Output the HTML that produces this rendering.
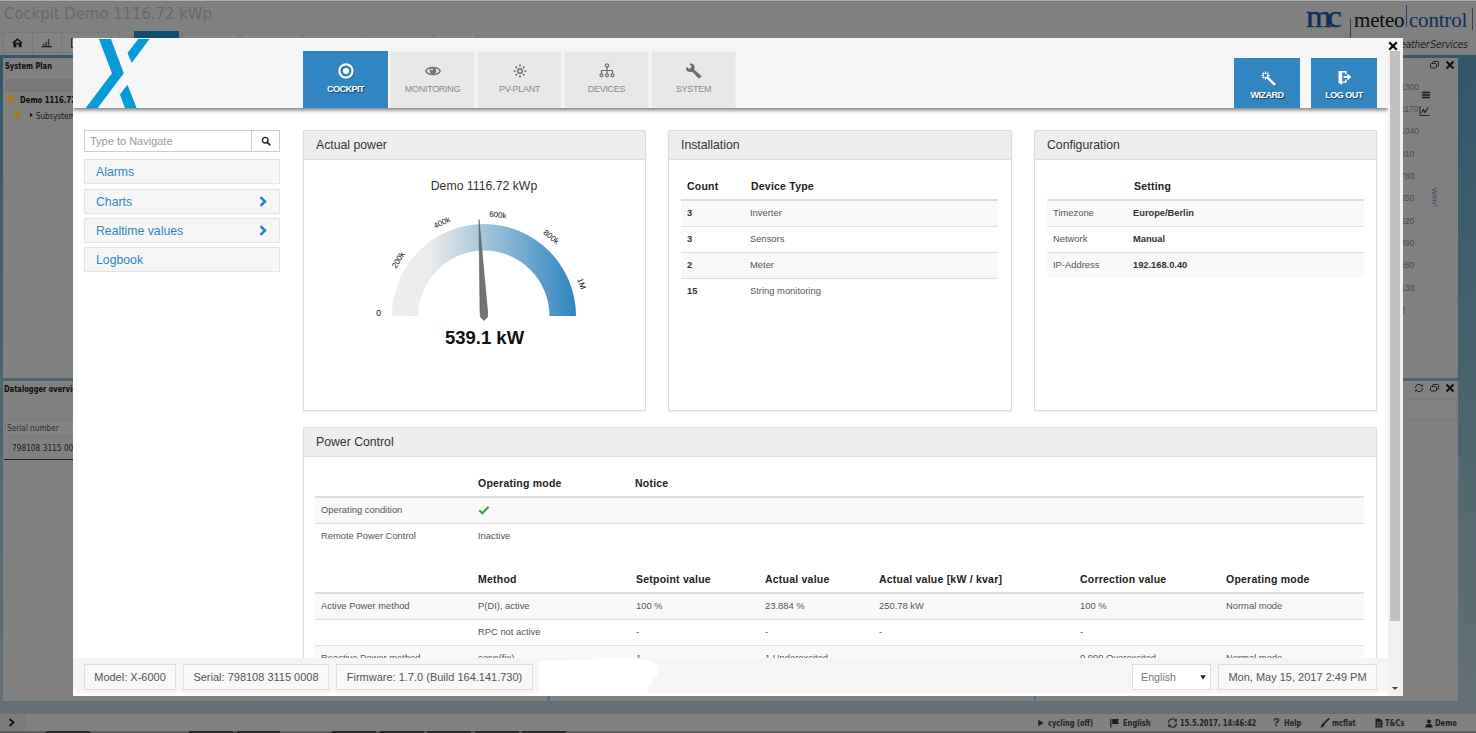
<!DOCTYPE html>
<html lang="en">
<head>
<meta charset="utf-8">
<title>Cockpit Demo 1116.72 kWp</title>
<style>
*{box-sizing:border-box;margin:0;padding:0}
html,body{width:1476px;height:733px;overflow:hidden;background:#808080;font-family:"Liberation Sans",Arial,sans-serif;}
.abs{position:absolute}
#bg{position:absolute;left:0;top:0;width:1476px;height:733px;overflow:hidden;background:#808080;font-family:"DejaVu Sans Condensed","DejaVu Sans","Liberation Sans",sans-serif}
#bg div{position:absolute}
#bg .t{white-space:nowrap;color:#1c1c1c}
#bg .sb{font-size:8.5px;line-height:11px;font-weight:bold;color:#242424;transform:scaleX(.88);transform-origin:0 0;font-family:'DejaVu Sans Condensed','Liberation Sans',sans-serif}
/* modal */
#modal{position:absolute;left:73px;top:38px;width:1330px;height:658px;background:#fff;overflow:hidden}
#modal .a{position:absolute}
#hdr{position:absolute;left:0;top:0;width:1315px;height:70px;background:#f6f6f6;box-shadow:0 2px 4px rgba(0,0,0,.55);z-index:5;clip-path:inset(0 0 -10px 0)}
.tab{position:absolute;top:13px;width:85px;height:57px;background:#e8e8e8;border:1px solid #f0f0f0;border-bottom:none;color:#8a8a8a;font-size:9px;text-align:center;letter-spacing:-0.3px}
.tab span{position:absolute;left:0;right:0;top:32px;line-height:10px}
.tab.act{background:#3186c1;border-color:#3186c1;color:#fff;font-weight:bold;text-shadow:1px 1px 1px rgba(0,0,0,.55);letter-spacing:-0.5px}
.tab svg{position:absolute;left:50%;top:0}
.btn{position:absolute;top:20px;width:66px;height:50px;background:#3186c1;color:#fff;font-weight:bold;font-size:9px;text-align:center;letter-spacing:-0.5px;text-shadow:1px 1px 1px rgba(0,0,0,.55)}
.btn span{position:absolute;left:0;right:0;top:32px;line-height:10px}
/* sidebar */
.nav{position:absolute;left:11px;width:196px;height:25px;background:#f6f6f6;border:1px solid #e4e4e4;color:#3186c1;font-size:12.25px;line-height:25px;padding-left:11px}
.nav svg{position:absolute;right:12px;top:6px}
/* panels */
.panel{position:absolute;border:1px solid #ddd;background:#fff;box-shadow:0 1px 1px rgba(0,0,0,.05)}
.ph{position:absolute;left:0;top:0;right:0;height:29px;background:#eeeeee;border-bottom:1px solid #ddd;color:#333;font-size:12.25px;line-height:28px;padding-left:12px}
.th{position:absolute;font-weight:bold;font-size:10.5px;color:#222;letter-spacing:.22px;white-space:nowrap;line-height:12px}
.row{position:absolute;height:26px;border-top:1px solid #ddd}
.row.s{background:#f9f9f9}
.hl{position:absolute;height:2px;background:#ddd}
.td{position:absolute;font-size:9.4px;color:#555;white-space:nowrap;line-height:10px;top:7px}
.td.b{font-weight:bold;color:#333;font-size:9.3px}
/* footer */
#ftr{position:absolute;left:0;top:620px;width:1315px;height:35px;background:#f5f5f5;z-index:4}
.fb{position:absolute;top:6px;height:26px;border:1px solid #ddd;background:#f8f8f8;color:#555;font-size:11px;line-height:24px;text-align:center;white-space:nowrap}
</style>
</head>
<body>
<div id="bg">
<!--BG-->
<div style="left:0;top:0;width:1476px;height:1px;background:#b2b0b2"></div>
<div style="left:0;top:1px;width:1476px;height:1px;background:#7b7b7b"></div>
<div class="t" style="left:4px;top:3px;font-size:16.6px;line-height:22px;color:#686868;font-family:'DejaVu Sans Condensed','Liberation Sans',sans-serif;letter-spacing:-0.05px">Cockpit Demo 1116.72 kWp</div>
<!-- toolbar buttons -->
<div style="left:3px;top:32px;width:117px;height:21px;border:1px solid #787878;background:#838383"></div>
<div style="left:32px;top:32px;width:1px;height:21px;background:#787878"></div>
<div style="left:61px;top:32px;width:1px;height:21px;background:#787878"></div>
<div style="left:90px;top:32px;width:1px;height:21px;background:#787878"></div>
<svg class="abs" style="position:absolute;left:12px;top:38px" width="11" height="10" viewBox="0 0 11 10"><path d="M5.5 0.3 L10.8 5 L9.6 5 L9.6 9.3 L6.6 9.3 L6.6 6.2 L4.4 6.2 L4.4 9.3 L1.4 9.3 L1.4 5 L0.2 5 Z" fill="#151515"/><path d="M5.5 2.2 L2.6 4.8 L8.4 4.8 Z" fill="#838383"/><path d="M5.5 1 L1 5" stroke="#151515" stroke-width="1.2" fill="none"/></svg>
<svg style="position:absolute;left:41px;top:38px" width="12" height="10" viewBox="0 0 12 10"><path d="M0.5 8.7 H11" stroke="#1b1b1b" stroke-width="1.2"/><path d="M2.5 8 V5.5 M5 8 V4 M7.5 8 V1" stroke="#2a3a44" stroke-width="1.5"/></svg>
<div style="left:71px;top:38px;width:8px;height:10px;border:1px solid #333;background:#777"></div>
<!-- top tabs -->
<div style="left:134px;top:31px;width:45px;height:12px;background:#0c506e"></div>
<div style="left:182px;top:32px;width:56px;height:12px;border:1px solid #797979;background:#848484"></div>
<div style="left:241px;top:32px;width:59px;height:12px;border:1px solid #797979;background:#848484"></div>
<div style="left:303px;top:32px;width:59px;height:12px;border:1px solid #797979;background:#848484"></div>
<div style="left:365px;top:32px;width:68px;height:12px;border:1px solid #797979;background:#848484"></div>
<div style="left:436px;top:32px;width:41px;height:12px;border:1px solid #797979;background:#848484"></div>
<!-- desktop blue background -->
<div style="left:0;top:55px;width:1476px;height:659px;background:linear-gradient(180deg,#33566a 0%,#43606d 35%,#54686f 68%,#646f76 100%)"></div>
<div style="left:3px;top:58px;width:1455px;height:320px;background:#808080"></div>
<div style="left:3px;top:381px;width:1455px;height:320px;background:#808080"></div>
<div style="left:547px;top:696px;width:3px;height:5px;background:#5f6d77"></div>
<div style="left:1034px;top:696px;width:2px;height:5px;background:#5f6d77"></div>
<!-- left panel 1 -->
<div class="t" style="left:5px;top:61px;font-size:8.5px;line-height:11px;font-weight:bold;color:#0d0d0d;transform:scaleX(.88);transform-origin:0 0">System Plan</div>
<div style="left:5px;top:79px;width:80px;height:13px;background:#787878"></div>
<div style="left:5px;top:107px;width:80px;height:1px;background:#7b7b7b"></div>
<div style="left:10px;top:125px;width:80px;height:1px;background:#7b7b7b"></div>
<svg style="position:absolute;left:6px;top:94px" width="9" height="10" viewBox="0 0 9 10"><path d="M4.5 0.3 C6.8 0.3 7 3 7.2 5 C7.4 6.6 8.6 7.2 8.6 7.8 H0.4 C0.4 7.2 1.6 6.6 1.8 5 C2 3 2.2 0.3 4.5 0.3 Z M3.4 8.4 H5.6 C5.6 9.6 3.4 9.6 3.4 8.4Z" fill="#a9791f"/></svg>
<div class="t" style="left:20px;top:95px;font-size:8.5px;line-height:11px;font-weight:bold;color:#0d0d0d;transform:scaleX(.9);transform-origin:0 0">Demo 1116.72 kWp</div>
<svg style="position:absolute;left:13px;top:110px" width="9" height="10" viewBox="0 0 9 10"><path d="M4.5 0.3 C6.8 0.3 7 3 7.2 5 C7.4 6.6 8.6 7.2 8.6 7.8 H0.4 C0.4 7.2 1.6 6.6 1.8 5 C2 3 2.2 0.3 4.5 0.3 Z M3.4 8.4 H5.6 C5.6 9.6 3.4 9.6 3.4 8.4Z" fill="#a9791f"/></svg>
<div style="left:30px;top:113px;width:0;height:0;border-left:3px solid #111;border-top:2.5px solid transparent;border-bottom:2.5px solid transparent"></div>
<div class="t" style="left:36px;top:111px;font-size:8.5px;line-height:11px;color:#161616;transform:scaleX(.93);transform-origin:0 0">Subsystem 1</div>
<!-- left panel 2 -->
<div class="t" style="left:4px;top:384px;font-size:8.5px;line-height:11px;font-weight:bold;color:#0d0d0d;transform:scaleX(.88);transform-origin:0 0">Datalogger overview</div>
<div style="left:5px;top:420px;width:80px;height:16px;border:1px solid #7a7a7a;background:#838383"></div>
<div class="t" style="left:7px;top:423px;font-size:8.5px;line-height:11px;color:#2c2c2c;transform:scaleX(.96);transform-origin:0 0">Serial number</div>
<div class="t" style="left:12px;top:443px;font-size:8.5px;line-height:11px;color:#1b1b1b;transform:scaleX(.97);transform-origin:0 0">798108 3115 0008</div>
<div style="left:4px;top:459px;width:80px;height:1px;background:#1f1f1f"></div>
<!-- right panel 1 -->
<div style="left:1396px;top:399px;width:61px;height:21px;border:1px solid #797979;background:#828282"></div>
<!-- right panel icons -->
<svg style="position:absolute;left:1429px;top:60px" width="28" height="10" viewBox="0 0 28 10"><rect x="3.5" y="1.5" width="6" height="4.5" rx="1" fill="none" stroke="#222" stroke-width="1"/><rect x="1.5" y="3.5" width="6" height="4.5" rx="1" fill="#808080" stroke="#222" stroke-width="1"/><path d="M17.5 1.5 L24.5 8.5 M24.5 1.5 L17.5 8.5" stroke="#111" stroke-width="2"/></svg>
<svg style="position:absolute;left:1414px;top:383px" width="43" height="10" viewBox="0 0 43 10"><path d="M1.5 5 A3.5 3.5 0 0 1 8 3 M8.5 5 A3.5 3.5 0 0 1 2 7" fill="none" stroke="#222" stroke-width="1"/><path d="M8.8 1 V3.6 H6.2Z M1.2 9 V6.4 H3.8Z" fill="#222"/><rect x="18.5" y="1.5" width="6" height="4.5" rx="1" fill="none" stroke="#222" stroke-width="1"/><rect x="16.5" y="3.5" width="6" height="4.5" rx="1" fill="#808080" stroke="#222" stroke-width="1"/><path d="M32.5 1.5 L39.5 8.5 M39.5 1.5 L32.5 8.5" stroke="#111" stroke-width="2"/></svg>
<!-- chart axis -->
<div class="t" style="left:1400.5px;top:82px;font-size:8.3px;line-height:10px;color:#4a4a4a;font-family:'Liberation Sans',sans-serif">1300</div>
<div class="t" style="left:1400.5px;top:104px;font-size:8.3px;line-height:10px;color:#4a4a4a;font-family:'Liberation Sans',sans-serif">1170</div>
<div class="t" style="left:1400.5px;top:126px;font-size:8.3px;line-height:10px;color:#4a4a4a;font-family:'Liberation Sans',sans-serif">1040</div>
<div class="t" style="left:1400.5px;top:149px;font-size:8.3px;line-height:10px;color:#4a4a4a;font-family:'Liberation Sans',sans-serif">910</div>
<div class="t" style="left:1400.5px;top:171px;font-size:8.3px;line-height:10px;color:#4a4a4a;font-family:'Liberation Sans',sans-serif">780</div>
<div class="t" style="left:1400.5px;top:193px;font-size:8.3px;line-height:10px;color:#4a4a4a;font-family:'Liberation Sans',sans-serif">650</div>
<div class="t" style="left:1400.5px;top:216px;font-size:8.3px;line-height:10px;color:#4a4a4a;font-family:'Liberation Sans',sans-serif">520</div>
<div class="t" style="left:1400.5px;top:238px;font-size:8.3px;line-height:10px;color:#4a4a4a;font-family:'Liberation Sans',sans-serif">390</div>
<div class="t" style="left:1400.5px;top:260px;font-size:8.3px;line-height:10px;color:#4a4a4a;font-family:'Liberation Sans',sans-serif">260</div>
<div class="t" style="left:1400.5px;top:283px;font-size:8.3px;line-height:10px;color:#4a4a4a;font-family:'Liberation Sans',sans-serif">130</div>
<div class="t" style="left:1400.5px;top:305px;font-size:8.3px;line-height:10px;color:#4a4a4a;font-family:'Liberation Sans',sans-serif">0</div>
<div class="t" style="left:1424px;top:192px;font-size:8px;line-height:10px;color:#3e4a66;font-family:'Liberation Sans',sans-serif;transform:rotate(90deg);transform-origin:50% 50%">W/m²</div>
<svg style="position:absolute;left:1421px;top:91px;overflow:visible" width="12" height="26" viewBox="0 0 12 26"><path d="M1 1.5 H9 M1 4 H9 M1 6.5 H9" stroke="#1a1a1a" stroke-width="1.4"/><g transform="translate(-1.5 0)"><path d="M0.5 15 V24.5 H10" stroke="#222" stroke-width="1" fill="none"/><path d="M2 22 L4 18.5 L5.5 21.5 L8.5 16.5" stroke="#222" stroke-width="1.2" fill="none"/></g></svg>
<!-- top-right logo -->
<div class="t" style="left:1306px;top:-1px;font-size:31px;line-height:36px;color:#0f2e58;font-family:'Liberation Serif',serif;-webkit-text-stroke:0.4px #0f2e58;transform:scaleX(1.06);transform-origin:0 0">m<span style="margin-left:-4px">c</span></div>
<div style="left:1350px;top:18px;width:1px;height:20px;background:#28466a"></div>
<div class="t" style="left:1354px;top:8px;font-size:21px;line-height:24px;color:#0b0b0b;font-family:'Liberation Serif',serif;letter-spacing:-0.2px">meteo</div>
<div style="left:1406px;top:5px;width:1px;height:22px;background:#28466a"></div>
<div class="t" style="left:1409px;top:8px;font-size:21px;line-height:24px;color:#0f2e58;font-family:'Liberation Serif',serif;letter-spacing:-0.2px">control</div>
<div style="left:1472px;top:8px;width:1px;height:22px;background:#28466a"></div>
<div class="t" style="left:1391px;top:38px;font-size:10.5px;line-height:12px;color:#262626;font-style:italic;font-family:'DejaVu Sans Condensed','Liberation Sans',sans-serif;letter-spacing:-0.3px">Weather<span style="margin-left:1px">Services</span></div>
<!-- status bar -->
<div style="left:0;top:714px;width:1476px;height:19px;background:#808080"></div>
<div style="left:0;top:714px;width:26px;height:18px;background:#7b7b7b"></div>
<div style="left:0;top:731px;width:1476px;height:2px;background:linear-gradient(#6a6a6a,#4c4c4c)"></div>
<div style="left:46px;top:731px;width:44px;height:2px;background:#2a2a2a"></div>
<div style="left:189px;top:731px;width:91px;height:2px;background:repeating-linear-gradient(90deg,#2a2a2a 0,#2a2a2a 44px,#555 44px,#555 47.6px)"></div>
<div style="left:332px;top:731px;width:235px;height:2px;background:repeating-linear-gradient(90deg,#2a2a2a 0,#2a2a2a 44px,#555 44px,#555 47.6px)"></div>
<svg style="position:absolute;left:8px;top:718px" width="8" height="9" viewBox="0 0 8 9"><path d="M1.5 1 L5.5 4.5 L1.5 8" fill="none" stroke="#111" stroke-width="1.8"/></svg>
<svg style="position:absolute;left:1038px;top:719px" width="6" height="8" viewBox="0 0 6 8"><path d="M0.3 0.8 L5.6 4 L0.3 7.2 Z" fill="#1e1e1e"/></svg>
<div class="t sb" style="left:1048px;top:718px">cycling (off)</div>
<svg style="position:absolute;left:1110px;top:718px" width="10" height="10" viewBox="0 0 10 10"><path d="M0.8 0.8 V9.5" stroke="#1e1e1e" stroke-width="1.2"/><path d="M2.2 1 H9 L7.8 3.500 L9 6 H2.200 Z" fill="#1e1e1e"/></svg>
<div class="t sb" style="left:1123px;top:718px">English</div>
<svg style="position:absolute;left:1167px;top:718px" width="11" height="10" viewBox="0 0 11 10"><path d="M1.500 4.800 A4 4 0 0 1 8.800 2.600 M9.500 5.200 A4 4 0 0 1 2.200 7.400" fill="none" stroke="#1e1e1e" stroke-width="1.1"/><path d="M9.800 0.600 V3.600 H6.800Z M1.200 9.400 V6.400 H4.200Z" fill="#1e1e1e"/></svg>
<div class="t sb" style="left:1179.500px;top:718px">15.5.2017, 14:46:42</div>
<div class="t sb" style="left:1273px;top:717px;font-size:11px;transform:none;font-family:'Liberation Sans',sans-serif">?</div>
<div class="t sb" style="left:1284px;top:718px">Help</div>
<svg style="position:absolute;left:1319px;top:718px" width="11" height="10" viewBox="0 0 11 10"><path d="M9.800 0.600 L4.500 6" stroke="#1e1e1e" stroke-width="1.600" stroke-linecap="round"/><path d="M4.600 5.400 C3 5.400 2.600 7 2.400 8 C2 9 1 9.300 0.500 9.300 C2.500 9.800 5.600 8.800 5.400 6.200 Z" fill="#1e1e1e"/></svg>
<div class="t sb" style="left:1332px;top:718px">mcflat</div>
<svg style="position:absolute;left:1374.500px;top:718px" width="8" height="10" viewBox="0 0 8 10"><path d="M0.500 0.500 H5 L7.500 3 V9.500 H0.500 Z" fill="#1e1e1e"/><path d="M1.800 4.500 H6 M1.800 6.200 H6 M1.800 7.900 H6" stroke="#808080" stroke-width="0.700"/></svg>
<div class="t sb" style="left:1385px;top:718px">T&amp;Cs</div>
<svg style="position:absolute;left:1424.500px;top:719px" width="8" height="9" viewBox="0 0 8 9"><circle cx="4" cy="2.400" r="2" fill="#1e1e1e"/><path d="M0.300 8.500 C0.300 5.500 2 5 4 5 C6 5 7.700 5.500 7.700 8.500 Z" fill="#1e1e1e"/></svg>
<div class="t sb" style="left:1434.500px;top:718px">Demo</div>
<!--/BG-->
</div>
<div id="modal">
<!--MODAL-->
<!-- scrollbar -->
<div class="a" style="left:1315px;top:0;width:15px;height:658px;background:#f1f1f1"></div>
<div class="a" style="left:1317px;top:13px;width:10px;height:570px;background:#c1c1c1"></div>
<div class="a" style="left:1319px;top:649px;width:0;height:0;border-top:3px solid #444;border-left:3.5px solid transparent;border-right:3.5px solid transparent"></div>
<div class="a" style="left:1315px;top:0;width:15px;height:13px;background:#f6f6f6;z-index:6"></div>
<svg class="a" style="left:1315px;top:3px;z-index:7" width="10" height="10" viewBox="0 0 10 10"><path d="M1.2 1.2 L8.8 8.8 M8.8 1.2 L1.2 8.8" stroke="#000" stroke-width="2.2"/></svg>
<!-- header -->
<div id="hdr">
<svg class="a" style="left:10px;top:1px" width="70" height="69" viewBox="0 0 70 69"><path d="M15.9 0 L27.9 0 L40.8 34.3 L14.3 69.5 L2.3 69.5 L29 34.3 Z" fill="#069ad9"/><path d="M55.2 0 L66.5 0 L48.7 24 L44.5 14 Z" fill="#069ad9"/><path d="M44.5 45.8 L53.8 69.5 L42.1 69.5 L36.9 55.4 Z" fill="#069ad9"/></svg>
<div class="tab act" style="left:230px"><svg width="18" height="18" viewBox="0 0 18 18" style="margin-left:-9px;top:10px"><circle cx="9.7" cy="9.7" r="6.6" fill="none" stroke="rgba(0,0,0,.35)" stroke-width="2"/><circle cx="9" cy="9" r="6.6" fill="none" stroke="#fff" stroke-width="2.2"/><circle cx="9" cy="9" r="3" fill="#fff"/></svg><span>COCKPIT</span></div>
<div class="tab" style="left:317px"><svg width="16" height="10" viewBox="0 0 16 10" style="margin-left:-8px;top:14px"><path d="M0.7 5 C3 0.4 13 0.4 15.3 5 C13 9.6 3 9.6 0.7 5 Z" fill="none" stroke="#757575" stroke-width="1.5"/><circle cx="8" cy="4.7" r="3.2" fill="#757575"/><circle cx="6.9" cy="3.5" r="1" fill="#e8e8e8"/></svg><span>MONITORING</span></div>
<div class="tab" style="left:404px"><svg width="14" height="14" viewBox="0 0 14 14" style="margin-left:-7px;top:12px"><circle cx="7" cy="7" r="2.3" fill="none" stroke="#6e6e6e" stroke-width="1.4"/><path d="M7 0.6 V2.6 M7 11.4 V13.4 M0.6 7 H2.6 M11.4 7 H13.4 M2.5 2.5 L3.9 3.9 M10.1 10.1 L11.5 11.5 M2.5 11.5 L3.9 10.1 M10.1 3.9 L11.5 2.5" stroke="#6e6e6e" stroke-width="1.7"/></svg><span>PV-PLANT</span></div>
<div class="tab" style="left:491px"><svg width="16" height="15" viewBox="0 0 16 15" style="margin-left:-8px;top:11px"><path d="M8 4 V7.5 M2.5 11 V7.5 H13.5 V11 M8 7.5 V11" fill="none" stroke="#6e6e6e" stroke-width="1.2"/><circle cx="8" cy="2.5" r="1.6" fill="none" stroke="#6e6e6e" stroke-width="1.2"/><circle cx="2.5" cy="12.3" r="1.5" fill="none" stroke="#6e6e6e" stroke-width="1.2"/><circle cx="8" cy="12.3" r="1.5" fill="none" stroke="#6e6e6e" stroke-width="1.2"/><circle cx="13.5" cy="12.3" r="1.5" fill="none" stroke="#6e6e6e" stroke-width="1.2"/></svg><span>DEVICES</span></div>
<div class="tab" style="left:578px"><svg width="16" height="16" viewBox="0 0 16 16" style="margin-left:-8px;top:11px"><path d="M4.580 0.220 A4.400 4.400 0 1 1 -0.180 4.980 L1.410 3.970 A2 2 0 1 0 3.570 1.810 Z" fill="#6e6e6e"/><path d="M7.860 6.140 L15.700 13.160 L13 15.840 L5.740 8.260 Z" fill="#6e6e6e"/></svg><span>SYSTEM</span></div>
<div class="btn" style="left:1161px"><svg class="a" width="16" height="16" viewBox="0 0 16 16" style="left:27px;top:13px"><path d="M7.2 7.2 L14.2 14.2" stroke="rgba(0,0,0,.4)" stroke-width="2.4" stroke-linecap="round"/><path d="M6.5 6.5 L13.4 13.4" stroke="#fff" stroke-width="2.6" stroke-linecap="round"/><path d="M4.5 0.5 V3 M4.5 6 V8.5 M0.5 4.5 H3 M6 4.5 H8.5 M1.7 1.7 L3.2 3.2 M7.3 1.7 L5.8 3.2 M1.7 7.3 L3.2 5.8" stroke="#fff" stroke-width="1.3"/></svg><span>WIZARD</span></div>
<div class="btn" style="left:1238px;width:66px"><svg class="a" width="16" height="16" viewBox="0 0 16 16" style="left:26px;top:12px"><path d="M1.5 1 H9.5 V4.2 H8 V2.4 H5.2 L5.2 15 L1.5 12.8 Z" fill="#fff"/><path d="M8 9.6 H9.5 V12.8 H5.2 V11.6 H8 Z" fill="#fff"/><path d="M6.6 5.9 H10.4 V3.6 L14.4 7 L10.4 10.4 V8.1 H6.6 Z" fill="#fff"/></svg><span>LOG OUT</span></div>
</div>
<!-- sidebar -->
<div class="a" style="left:11px;top:92px;width:196px;height:22px;border:1px solid #ccc;background:#fff"></div>
<div class="a" style="left:178px;top:93px;width:1px;height:20px;background:#ccc"></div>
<div class="a" style="left:17px;top:97px;font-size:11px;line-height:12px;color:#999;white-space:nowrap">Type to Navigate</div>
<svg class="a" style="left:188px;top:98px" width="11" height="11" viewBox="0 0 11 11"><circle cx="4.2" cy="4.2" r="2.8" fill="none" stroke="#222" stroke-width="1.4"/><path d="M6.3 6.3 L8.8 8.8" stroke="#222" stroke-width="1.7" stroke-linecap="round"/></svg>
<div class="nav" style="top:121px">Alarms</div>
<div class="nav" style="top:151px">Charts<svg width="8" height="11" viewBox="0 0 8 11"><path d="M1.5 1.2 L6 5.5 L1.5 9.8" fill="none" stroke="#2d7fbd" stroke-width="2.5"/></svg></div>
<div class="nav" style="top:180px">Realtime values<svg width="8" height="11" viewBox="0 0 8 11"><path d="M1.5 1.2 L6 5.5 L1.5 9.8" fill="none" stroke="#2d7fbd" stroke-width="2.5"/></svg></div>
<div class="nav" style="top:209px">Logbook</div>
<!-- panel: actual power -->
<div class="panel" style="left:230px;top:92px;width:343px;height:281px"><div class="ph">Actual power</div>
<svg class="a" style="left:0;top:29px" width="341" height="250" viewBox="0 0 341 250" font-family="'Liberation Sans',Arial,sans-serif">
<defs><linearGradient id="gg" x1="0" y1="0" x2="1" y2="0"><stop offset="0" stop-color="#eeeeee"/><stop offset="0.2" stop-color="#ececec"/><stop offset="1" stop-color="#2f85c0"/></linearGradient></defs>
<text x="180" y="30" font-size="12.25" fill="#333" text-anchor="middle">Demo 1116.72 kWp</text>
<path d="M88 156 A92 92 0 0 1 272 156 L245.500 156 A65.500 65.500 0 0 0 114.500 156 Z" fill="url(#gg)"/>
<g font-size="8" fill="#111" text-anchor="middle">
<text x="74.500" y="156" font-size="8.5">0</text>
<text transform="translate(96.500 101.500) rotate(-57.800)">200k</text>
<text transform="translate(139 65) rotate(-25.500)">400k</text>
<text transform="translate(193.500 57.500) rotate(6.700)">600k</text>
<text transform="translate(245.500 79) rotate(38.900)">800k</text>
<text transform="translate(275 124.500) rotate(71.200)">1M</text>
</g>
<path d="M175 59.500 L183.500 151 L183.500 157 L180 160.500 L176.500 157 L176 151 Z" fill="#737373" stroke="#555" stroke-width="0.6" stroke-linejoin="round"/>
<text x="180.5" y="183.500" font-size="18.5" font-weight="bold" fill="#111" text-anchor="middle">539.1 kW</text>
</svg>
</div>
<!-- panel: installation -->
<div class="panel" style="left:595px;top:92px;width:344px;height:281px"><div class="ph">Installation</div>
<div class="th" style="left:18px;top:49px">Count</div><div class="th" style="left:82px;top:49px">Device Type</div>
<div class="hl" style="left:12px;top:68px;width:317px"></div>
<div class="row s" style="left:12px;top:70px;width:317px;border-top:none;height:25px"><div class="td b" style="left:6px">3</div><div class="td" style="left:69px">Inverter</div></div>
<div class="row" style="left:12px;top:95px;width:317px"><div class="td b" style="left:6px">3</div><div class="td" style="left:69px">Sensors</div></div>
<div class="row s" style="left:12px;top:121px;width:317px"><div class="td b" style="left:6px">2</div><div class="td" style="left:69px">Meter</div></div>
<div class="row" style="left:12px;top:147px;width:317px"><div class="td b" style="left:6px">15</div><div class="td" style="left:69px">String monitoring</div></div>
</div>
<!-- panel: configuration -->
<div class="panel" style="left:961px;top:92px;width:343px;height:281px"><div class="ph">Configuration</div>
<div class="th" style="left:99px;top:49px">Setting</div>
<div class="hl" style="left:12px;top:68px;width:317px"></div>
<div class="row s" style="left:12px;top:70px;width:317px;border-top:none;height:25px"><div class="td" style="left:6px">Timezone</div><div class="td b" style="left:86px">Europe/Berlin</div></div>
<div class="row" style="left:12px;top:95px;width:317px"><div class="td" style="left:6px">Network</div><div class="td b" style="left:86px">Manual</div></div>
<div class="row s" style="left:12px;top:121px;width:317px"><div class="td" style="left:6px">IP-Address</div><div class="td b" style="left:86px">192.168.0.40</div></div>
</div>
<!-- panel: power control -->
<div class="panel" style="left:230px;top:389px;width:1074px;height:400px"><div class="ph">Power Control</div>
<div class="th" style="left:174px;top:49px">Operating mode</div><div class="th" style="left:331px;top:49px">Notice</div>
<div class="hl" style="left:11px;top:68px;width:1049px"></div>
<div class="row s" style="left:11px;top:70px;width:1049px;border-top:none;height:25px"><div class="td" style="left:6px">Operating condition</div><svg class="a" style="left:163px;top:7px" width="12" height="10" viewBox="0 0 12 10"><path d="M1.2 5.2 L4.4 8.2 L10.6 1.8" fill="none" stroke="#3fa33f" stroke-width="2.1"/></svg></div>
<div class="row" style="left:11px;top:95px;width:1049px"><div class="td" style="left:6px">Remote Power Control</div><div class="td" style="left:163px">Inactive</div></div>
<div class="th" style="left:174px;top:145px">Method</div><div class="th" style="left:332px;top:145px">Setpoint value</div><div class="th" style="left:461px;top:145px">Actual value</div><div class="th" style="left:575px;top:145px">Actual value [kW / kvar]</div><div class="th" style="left:776px;top:145px">Correction value</div><div class="th" style="left:922px;top:145px">Operating mode</div>
<div class="hl" style="left:11px;top:164px;width:1049px"></div>
<div class="row s" style="left:11px;top:166px;width:1049px;border-top:none;height:25px"><div class="td" style="left:6px">Active Power method</div><div class="td" style="left:163px">P(DI), active</div><div class="td" style="left:321px">100 %</div><div class="td" style="left:450px">23.884 %</div><div class="td" style="left:564px">250.78 kW</div><div class="td" style="left:765px">100 %</div><div class="td" style="left:911px">Normal mode</div></div>
<div class="row" style="left:11px;top:191px;width:1049px"><div class="td" style="left:163px">RPC not active</div><div class="td" style="left:321px">-</div><div class="td" style="left:450px">-</div><div class="td" style="left:564px">-</div><div class="td" style="left:765px">-</div></div>
<div class="row s" style="left:11px;top:217px;width:1049px"><div class="td" style="left:6px">Reactive Power method</div><div class="td" style="left:163px">cosφ(fix)</div><div class="td" style="left:321px">1</div><div class="td" style="left:450px">1 Underexcited</div><div class="td" style="left:765px">0.999 Overexcited</div><div class="td" style="left:911px">Normal mode</div></div>
</div>
<!-- footer -->
<div id="ftr">
<div class="fb" style="left:11px;width:92px">Model: X-6000</div>
<div class="fb" style="left:110px;width:146px">Serial: 798108 3115 0008</div>
<div class="fb" style="left:263px;width:197px">Firmware: 1.7.0 (Build 164.141.730)</div>
<svg class="a" style="left:462px;top:-1px" width="126" height="36" viewBox="0 0 126 36"><path d="M3 4.500 C20 3 40 3.500 60 1.500 C80 0.500 100 1 110 3 C118 4 122 6 122.500 10 C123.500 14 123 18 121 19.500 L118 20 C118 24 117.500 27 115 28 L112.500 29 L112.500 36 L4 36 C3 30 4.500 22 3.500 16 C3 12 2 8 3 4.500 Z" fill="#fff"/></svg>
<div class="fb" style="left:1059px;width:79px;background:#fff;text-align:left;padding-left:8px;color:#777;font-size:10.7px">English<svg class="a" style="right:4px;top:10px" width="6" height="5" viewBox="0 0 6 5"><path d="M0.3 0.3 H5.700 L3 4.700 Z" fill="#222"/></svg></div>
<div class="fb" style="left:1145px;width:159px">Mon, May 15, 2017 2:49 PM</div>
</div>
<div class="a" style="left:0;top:655px;width:1315px;height:3px;background:#fff;z-index:4"></div>
<div class="a" style="left:0;top:652px;width:3px;height:6px;background:#fff;z-index:4"></div>
<!--/MODAL-->
</div>
</body>
</html>
